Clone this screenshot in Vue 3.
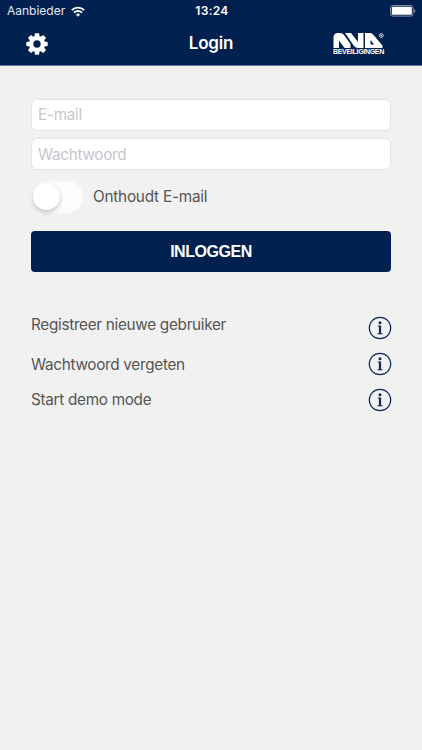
<script setup>
import { ref } from 'vue'

const email = ref('')
const password = ref('')
const remember = ref(false)
const links = [
  { label: 'Registreer nieuwe gebruiker', key: 'register' },
  { label: 'Wachtwoord vergeten', key: 'forgot' },
  { label: 'Start demo mode', key: 'demo' },
]
</script>

<template>
  <div class="screen">
    <header class="top">
      <div class="status">
        <div class="carrier">
          <span>Aanbieder</span>
          <svg class="wifi" width="14" height="11" viewBox="0 0 14 11" fill="none" stroke="#fff" stroke-width="1.9">
            <path d="M0.8 4.1a9 9 0 0 1 12.4 0" />
            <path d="M3 6.6a5.8 5.8 0 0 1 8 0" />
            <path d="M7 10.7L4.9 8.6a3 3 0 0 1 4.2 0z" fill="#fff" stroke="none" />
          </svg>
        </div>
        <span class="time">13:24</span>
        <svg class="battery" width="26" height="12" viewBox="0 0 26 12">
          <rect x="0.5" y="0.5" width="22.6" height="10.6" rx="2.4" fill="none" stroke="#8390aa" />
          <rect x="1.8" y="1.8" width="20" height="8" rx="1.2" fill="#fff" />
          <path d="M24.2 4v3.8q1.2-.5 1.2-1.9T24.2 4z" fill="#8390aa" />
        </svg>
      </div>
      <nav class="bar">
        <svg class="gear" width="22" height="22" viewBox="-11 -11 22 22">
          <g fill="#fff">
            <rect v-for="n in 4" :key="n" x="-2.3" y="-10.7" width="4.6" height="21.4" rx="1" :transform="`rotate(${n * 45})`" />
            <circle r="8.2" />
          </g>
          <circle r="3.7" fill="#00214f" />
        </svg>
        <h1>Login</h1>
        <div class="logo">
          <svg width="51" height="16" viewBox="0 0 51 16" fill="#fff">
            <path d="M0.5 15V4.5Q0.5 0 5 0H7.5Q9.5 0 11 2L17.5 11V15H11.5L6 7.5V15z" />
            <path d="M12 0H18L25 9V0H30.5V15H25Q22.500 15 21 13z" />
            <path fill-rule="evenodd" d="M32 0H37Q39 0 40.5 2L49.5 12.500V15H32zM37.5 7V11.5H41.2z" />
            <circle cx="48.3" cy="2.5" r="1.9" fill="none" stroke="#fff" stroke-width=".8" />
            <circle cx="48.3" cy="2.5" r=".7" />
          </svg>
          <span>BEVEILIGINGEN</span>
        </div>
      </nav>
    </header>

    <main>
      <form @submit.prevent>
        <input v-model="email" type="text" placeholder="E-mail" />
        <input v-model="password" type="password" placeholder="Wachtwoord" />
        <label class="remember">
          <input v-model="remember" type="checkbox" />
          <span class="switch"><i></i></span>
          <span class="caption">Onthoudt E-mail</span>
        </label>
        <button type="submit">INLOGGEN</button>
      </form>
      <ul>
        <li v-for="link in links" :key="link.key" :class="link.key">
          <span>{{ link.label }}</span>
          <svg width="24" height="24" viewBox="0 0 24 24" fill="#10295b">
            <circle cx="12" cy="12" r="10.7" fill="none" stroke="#10295b" stroke-width="1.2" />
            <circle cx="12" cy="6.8" r="1.5" />
            <path d="M9.5 9.5H13.1V17.2L14.7 17.6V18.3H9.3V17.6L10.9 17.2V10.6L9.5 10.2z" />
          </svg>
        </li>
      </ul>
    </main>
  </div>
</template>

<style>
body {
  background: #f1f1f1;
}
</style>

<style scoped>
* {
  box-sizing: border-box;
}
.screen {
  min-height: 750px;
  background: #f1f1f1;
  color: #555;
  font-family: Inter, sans-serif;
}
.top {
  height: 66px;
  background: #00214f;
  border-bottom: 1px solid #69758e;
  color: #fff;
}
.status {
  display: grid;
  grid-template-columns: 1fr auto 1fr;
  align-items: center;
  height: 22px;
  padding: 0 6px 0 7px;
  font-size: 12px;
}
.carrier {
  display: flex;
  align-items: center;
  gap: 6px;
  color: #e3e8f0;
}
.carrier span {
  padding-bottom: 2px;
}
.time {
  padding: 0 0 2px 1px;
  font-weight: 600;
  letter-spacing: 0.3px;
}
.battery {
  justify-self: end;
}
.bar {
  display: grid;
  grid-template-columns: 1fr auto 1fr;
  align-items: center;
  height: 43px;
  padding: 0 26px;
}
h1 {
  margin: 0 0 2px;
  font-size: 17px;
  font-weight: 600;
  letter-spacing: -0.2px;
}
.logo {
  display: flex;
  flex-direction: column;
  justify-self: end;
  width: 51px;
  margin-right: 12px;
}
.logo span {
  font: bold 7px/6px "Liberation Sans", sans-serif;
  letter-spacing: -0.3px;
  white-space: nowrap;
}
main {
  padding: 33px 31px 0;
}
form {
  display: flex;
  flex-direction: column;
}
input[type="text"],
input[type="password"] {
  width: 100%;
  height: 32px;
  margin: 0 0 7px;
  padding: 0 6px 1px;
  border: 1px solid #e3e3e4;
  border-radius: 6px;
  background: #fff;
  font: 15.3px Inter, sans-serif;
  letter-spacing: -0.3px;
  outline: none;
}
input[type="password"] {
  padding-bottom: 0;
}
input::placeholder {
  color: #c7c7cc;
  opacity: 1;
}
.remember {
  display: flex;
  align-items: center;
  gap: 10px;
  height: 32px;
  margin-top: 4px;
  font-size: 15.3px;
  letter-spacing: -0.22px;
}
.remember input {
  display: none;
}
.caption {
  padding-bottom: 1px;
}
.switch {
  display: block;
  width: 52px;
  height: 32px;
  padding: 2px;
  border-radius: 16px;
  background: #fcfcfc;
}
.switch i {
  display: block;
  width: 27px;
  height: 27px;
  border-radius: 50%;
  background: #fff;
  box-shadow: 0 2px 4px rgba(0, 0, 0, 0.25);
}
button {
  height: 41px;
  margin-top: 18px;
  border: 0;
  border-radius: 4px;
  background: #00214f;
  color: #fff;
  font: bold 16px "Liberation Sans", sans-serif;
  letter-spacing: -0.45px;
}
ul {
  display: flex;
  flex-direction: column;
  margin: 40px 0 0;
  padding: 0;
  list-style: none;
  font-size: 15.3px;
  letter-spacing: -0.3px;
}
li {
  display: flex;
  align-items: center;
  justify-content: space-between;
  height: 36px;
}
li svg {
  margin-right: -1px;
}
.register {
  align-items: flex-start;
  height: 34px;
  padding-top: 4px;
}
.register span {
  line-height: 17px;
}
.demo {
  height: 35px;
}
.demo span {
  padding-bottom: 1px;
}
</style>
